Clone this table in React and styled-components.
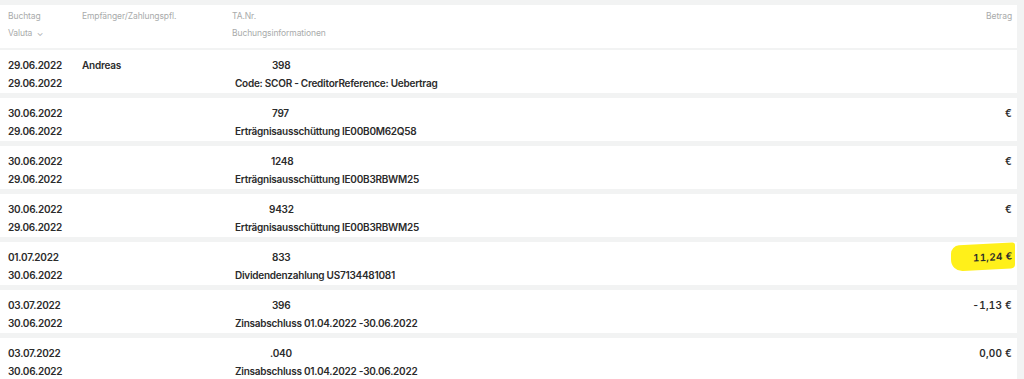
import React from 'react'
import styled, { createGlobalStyle } from 'styled-components'

const GlobalStyle = createGlobalStyle`
  body {
    margin: 0;
    background: #f2f3f3;
    font-family: Inter, "Noto Sans", sans-serif;
  }
`

const Page = styled.div`
  width: 1017px;
  padding-top: 5px;
  display: flex;
  flex-direction: column;
  gap: 5px;
`

const Card = styled.div`
  background: #fff;
  display: grid;
  grid-template-columns: 74px 150px 1fr 120px;
  padding: ${p => (p.$head ? '3px 5px 6px 8px' : '6px 5px 6px 8px')};
  line-height: ${p => (p.$head ? '17px' : '18px')};
  height: ${p => (p.$head ? '34px' : '31px')};
  margin-bottom: ${p => (p.$head ? '-3px' : '0')};
`

const Cell = styled.div`
  display: flex;
  flex-direction: column;
  white-space: nowrap;
  align-items: ${p => (p.$right ? 'flex-end' : 'flex-start')};
`

const HeadText = styled.span`
  font-size: 8.5px;
  color: #a9abab;
  letter-spacing: -0.1px;
`

const Text = styled.span`
  font-size: 10px;
  font-weight: 600;
  color: #2b2b2b;
  letter-spacing: -0.25px;
  padding-left: ${p => p.$indent || 0}px;
`

const Amount = styled(Text)`
  font-variant-numeric: tabular-nums;
  letter-spacing: 0.2px;
`

const Highlight = styled(Amount)`
  background: #fff01a;
  padding: 4px 3px 4px 22px;
  margin-top: -4px;
  margin-right: -3px;
  border-radius: 8px 3px 4px 12px;
  transform: skewY(-3deg);
`

const rows = [
  { b: '29.06.2022', v: '29.06.2022', name: 'Andreas', ta: '398', info: 'Code: SCOR - CreditorReference: Uebertrag', amt: '' },
  { b: '30.06.2022', v: '29.06.2022', ta: '797', info: 'Erträgnisausschüttung IE00B0M62Q58', amt: '€' },
  { b: '30.06.2022', v: '29.06.2022', ta: '1248', info: 'Erträgnisausschüttung IE00B3RBWM25', amt: '€', taIndent: 39 },
  { b: '30.06.2022', v: '29.06.2022', ta: '9432', info: 'Erträgnisausschüttung IE00B3RBWM25', amt: '€', taIndent: 37 },
  { b: '01.07.2022', v: '30.06.2022', ta: '833', info: 'Dividendenzahlung US7134481081', amt: '11,24 €', mark: true },
  { b: '03.07.2022', v: '30.06.2022', ta: '396', info: 'Zinsabschluss 01.04.2022 -30.06.2022', amt: '-1,13 €' },
  { b: '03.07.2022', v: '30.06.2022', ta: '.040', info: 'Zinsabschluss 01.04.2022 -30.06.2022', amt: '0,00 €', taIndent: 38 },
]

const App = () => {
  return (
    <>
      <GlobalStyle />
      <Page>
        <Card $head>
          <Cell>
            <HeadText>Buchtag</HeadText>
            <HeadText>Valuta &nbsp;⌄</HeadText>
          </Cell>
          <Cell>
            <HeadText>Empfänger/Zahlungspfl.</HeadText>
          </Cell>
          <Cell>
            <HeadText>TA.Nr.</HeadText>
            <HeadText>Buchungsinformationen</HeadText>
          </Cell>
          <Cell $right>
            <HeadText>Betrag</HeadText>
          </Cell>
        </Card>
        {rows.map((r, i) => (
          <Card key={i}>
            <Cell>
              <Text>{r.b}</Text>
              <Text>{r.v}</Text>
            </Cell>
            <Cell>
              <Text>{r.name}</Text>
            </Cell>
            <Cell>
              <Text $indent={r.taIndent || 40}>{r.ta}</Text>
              <Text $indent={3}>{r.info}</Text>
            </Cell>
            <Cell $right>
              {r.mark ? <Highlight>{r.amt}</Highlight> : <Amount>{r.amt}</Amount>}
            </Cell>
          </Card>
        ))}
      </Page>
    </>
  )
}

export default App
